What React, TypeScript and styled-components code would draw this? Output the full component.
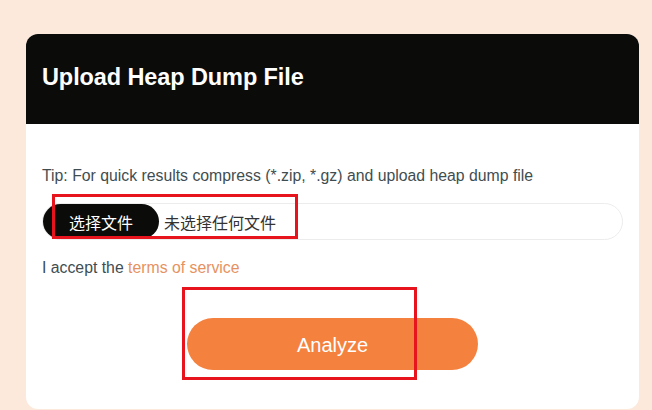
import styled, { createGlobalStyle } from "styled-components";

const GlobalStyle = createGlobalStyle`
  html, body {
    margin: 0;
    padding: 0;
    background: #fde8dc;
    font-family: "Liberation Sans", Arial, sans-serif;
    overflow: hidden;
  }
`;

const Page = styled.div`
  width: 652px;
  height: 410px;
  padding: 34px 13px 0 26px;
  box-sizing: border-box;
  position: relative;
`;

const Card = styled.div`
  background: #ffffff;
  border-radius: 12px;
  overflow: hidden;
  display: flex;
  flex-direction: column;
`;

const Header = styled.div`
  background: #0b0b09;
  height: 90px;
  display: flex;
  align-items: center;
  padding: 0 16px 4px;
  box-sizing: border-box;
`;

const Title = styled.h2`
  margin: 0;
  color: #ffffff;
  font-size: 23.5px;
  font-weight: 700;
  letter-spacing: -0.1px;
`;

const Body = styled.div`
  display: flex;
  flex-direction: column;
  padding: 42px 16px 39px;
`;

const Tip = styled.p`
  margin: 0;
  font-size: 15.8px;
  line-height: 20px;
  color: #3f4d51;
`;

const FileField = styled.label`
  margin-top: 17px;
  height: 37px;
  border: 1px solid #ececec;
  border-radius: 19px;
  box-sizing: border-box;
  display: flex;
  align-items: center;
  gap: 5px;
`;

const PickButton = styled.span`
  background: #0b0b09;
  color: #ffffff;
  height: 35px;
  width: 116px;
  border-radius: 18px;
  display: flex;
  align-items: center;
  justify-content: center;
  font-family: "Noto Sans CJK SC", sans-serif;
  font-size: 16px;
`;

const FileName = styled.span`
  font-family: "Noto Sans CJK SC", sans-serif;
  font-size: 16px;
  color: #333;
`;

const Accept = styled.p`
  margin: 18px 0 0;
  font-size: 15.8px;
  line-height: 20px;
  color: #3f4d51;
`;

const TermsLink = styled.a`
  color: #e6925f;
  text-decoration: none;
`;

const Actions = styled.div`
  margin-top: 40px;
  display: flex;
  justify-content: center;
`;

const AnalyzeButton = styled.button`
  width: 291px;
  height: 52px;
  padding: 3px 0 0;
  border: none;
  border-radius: 26px;
  background: #f5813f;
  color: #ffffff;
  font-family: "Liberation Sans", Arial, sans-serif;
  font-size: 20px;
  cursor: pointer;
`;

const Marker = styled.div<{ $x: number; $y: number; $w: number; $h: number }>`
  position: absolute;
  left: ${(p) => p.$x}px;
  top: ${(p) => p.$y}px;
  width: ${(p) => p.$w}px;
  height: ${(p) => p.$h}px;
  border: 3px solid #e8141d;
  box-sizing: border-box;
  pointer-events: none;
`;

export default function App() {
  return (
    <>
      <GlobalStyle />
      <Page>
        <Card>
          <Header>
            <Title>Upload Heap Dump File</Title>
          </Header>
          <Body>
            <Tip>
              Tip: For quick results compress (*.zip, *.gz) and upload heap dump file
            </Tip>
            <FileField>
              <PickButton>选择文件</PickButton>
              <FileName>未选择任何文件</FileName>
            </FileField>
            <Accept>
              I accept the <TermsLink href="#">terms of service</TermsLink>
            </Accept>
            <Actions>
              <AnalyzeButton>Analyze</AnalyzeButton>
            </Actions>
          </Body>
        </Card>
        <Marker $x={52} $y={194} $w={246} $h={45} />
        <Marker $x={182} $y={287} $w={235} $h={93} />
      </Page>
    </>
  );
}
